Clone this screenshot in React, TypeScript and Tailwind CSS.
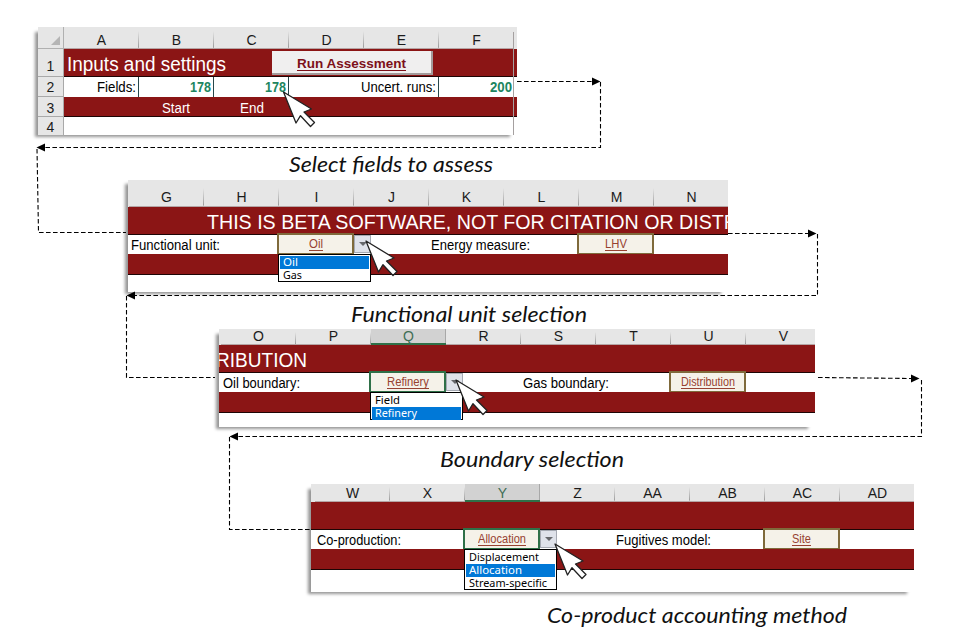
import { useLayoutEffect, useRef, useState, type ReactNode } from "react";

const SANS = "font-['Liberation_Sans',Arial,sans-serif]";

/** A single line of text, condensed or stretched to an exact width. */
function Fit({ w, className = "", line, children }: { w: number; className?: string; line?: boolean; children: ReactNode }) {
  const ref = useRef<HTMLSpanElement>(null);
  const [scale, setScale] = useState(1);
  useLayoutEffect(() => {
    const el = ref.current;
    if (el) setScale(w / parseFloat(getComputedStyle(el).width));
  }, [w]);
  return (
    <span className={`block shrink-0 whitespace-nowrap ${className}`} style={{ width: w }}>
      <span
        ref={ref}
        className={line ? "inline-block origin-left underline decoration-1 underline-offset-2" : "inline-block origin-left"}
        style={{ transform: `scaleX(${scale})` }}
      >
        {children}
      </span>
    </span>
  );
}

function Letters({ names, active, className = "" }: { names: string[]; active?: string; className?: string }) {
  return (
    <div className={`flex items-stretch bg-[#e6e6e6] text-[14px] leading-[15px] ${className}`}>
      {names.map((n) => (
        <div
          key={n}
          className={
            n === active
              ? "flex w-[75px] shrink-0 items-end justify-center border-b border-b-[#2f7048] bg-[#d2d2d2] text-[#3f6e55] shadow-[inset_0_-1px_0_#2f7048,inset_-1px_0_0_#a8a8a8]"
              : "flex w-[75px] shrink-0 items-end justify-center border-b border-b-[#b5a5a5] bg-linear-to-b from-transparent to-[#9b9b9b] bg-[length:1px_80%] bg-right-bottom bg-no-repeat text-[#1b1b1b]"
          }
        >
          {n}
        </div>
      ))}
    </div>
  );
}

function Red({ className, children }: { className: string; children?: ReactNode }) {
  return <div className={`flex overflow-hidden border-b border-[#1d0505] bg-[#8b1515] text-white ${className}`}>{children}</div>;
}

function Pick({ w, green, children }: { w: number; green?: boolean; children: ReactNode }) {
  return (
    <div
      className={`-mt-[2px] flex h-[22px] w-[77px] shrink-0 justify-center border-2 bg-[#f5f2e9] text-[12px] leading-[19px] text-[#974231] ${
        green ? "border-[#2f7048]" : "border-[#7f6a3b]"
      }`}
    >
      <Fit w={w} line>{children}</Fit>
    </div>
  );
}

function DropButton() {
  return (
    <div className="flex h-[18px] w-[17px] shrink-0 items-center justify-center border border-[#a5a9b2] bg-[#dfe2ea]">
      <div className="border-x-[4px] border-t-[4px] border-x-transparent border-t-[#66686c]" />
    </div>
  );
}

function Menu({ items, active, className }: { items: [string, number][]; active: string; className: string }) {
  return (
    <div className={`absolute w-[93px] border border-black bg-white p-px font-['Noto_Sans','Open_Sans',sans-serif] text-[11.5px] ${className}`}>
      {items.map(([t, w]) => (
        <div key={t} className={`h-[13px] pl-[3px] leading-[12px] ${t === active ? "bg-[#0078d7] text-white" : "text-black"}`}>
          <Fit w={w}>{t}</Fit>
        </div>
      ))}
    </div>
  );
}

function Caption({ w, className, children }: { w: number; className: string; children: ReactNode }) {
  return (
    <div className={`font-['Lato','Open_Sans',sans-serif] text-[21px] italic leading-[26px] text-[#111] ${className}`}>
      <Fit w={w}>{children}</Fit>
    </div>
  );
}

const SHADOW = "shadow-[-3px_2px_3px_rgba(0,0,0,0.42)]";

function Cursor({ x, y }: { x: number; y: number }) {
  return (
    <path
      transform={`translate(${x} ${y})`}
      d="M0 0 L28 17 L20.5 20 L31 30.5 L27 34.5 L17 23.7 L12.5 31 Z"
      fill="#fff"
      stroke="#222"
      strokeWidth="1.3"
      strokeLinejoin="round"
    />
  );
}

function Overlay() {
  return (
    <svg className="absolute left-0 top-0" width="959" height="642">
      <g stroke="#000" strokeWidth="1.1" strokeDasharray="4.6 2.4" fill="none">
        <path d="M517 81.5H594" />
        <path d="M600.5 82V147.5H44" />
        <path d="M37 149L38.5 232.5H126" />
        <path d="M728 233.5H810" />
        <path d="M817.5 234V295.5H134" />
        <path d="M126.5 296V377.5H215" />
        <path d="M818 377.5L912 378.5" />
        <path d="M921.5 380V436.5H237" />
        <path d="M229.5 437V529.5H311" />
      </g>
      <g fill="#000">
        <path d="M600.5 81.5l-8.500-4v8z" />
        <path d="M36.500 147.500l8.500-4v8z" />
        <path d="M816.500 233.500l-8.500-4v8z" />
        <path d="M126.500 295.500l8.500-4v8z" />
        <path d="M919.500 378.500l-8.500-4v8z" />
        <path d="M229.500 436.500l8.500-4v8z" />
      </g>
      <Cursor x={283.5} y={92} />
      <Cursor x={366} y={241} />
      <Cursor x={456} y={380} />
      <Cursor x={555} y={544} />
    </svg>
  );
}

function RowHead({ className, children }: { className: string; children: ReactNode }) {
  return (
    <div className={`flex w-[26px] shrink-0 items-end justify-center border-b border-r border-[#a9a9a9] bg-[#e6e6e6] text-[14px] leading-4 text-[#1b1b1b] ${className}`}>
      {children}
    </div>
  );
}

export default function App() {
  return (
    <main className={`relative flex h-[642px] w-[959px] flex-col items-start overflow-hidden bg-white ${SANS} text-black`}>
      <section className="relative ml-[38px] mt-[27px] h-[108px] w-[479px]">
        <div className={`absolute bottom-0 left-0 right-[4px] top-[3px] ${SHADOW}`} />
        <div className="relative flex h-full flex-col">
          <div className="flex h-[22px] bg-[#e6e6e6]">
            <div className="flex w-[26px] items-end justify-end border-b border-r border-[#b0b0b0] pb-[3px] pr-[3px]">
              <svg width="9" height="9">
                <path d="M9 0V9H0Z" fill="#b5b5b5" />
              </svg>
            </div>
            <Letters names={["A", "B", "C", "D", "E", "F"]} />
          </div>
          <div className="flex h-[28px]">
            <RowHead className="pb-[2px]">1</RowHead>
            <Red className="flex-1">
              <Fit w={159} className="ml-[3px] pt-[3px] text-[20px] leading-6">Inputs and settings</Fit>
              <div className="ml-[46px] mt-[2px] flex h-[24px] w-[161px] justify-center border-b-2 border-r-2 border-[#a39b9b] bg-[#f0efef] text-[13px] font-bold leading-[25px] text-[#7d1019]">
                <Fit w={109} line>Run Assessment</Fit>
              </div>
            </Red>
          </div>
          <div className="flex h-[20px] text-[14px] leading-[20px]">
            <RowHead className="pb-px">2</RowHead>
            <div className="flex w-[453px] bg-white">
              <div className="flex w-[75px] justify-end border-r border-[#27484c] pr-[2px]"><Fit w={39}>Fields:</Fit></div>
              <div className="flex w-[75px] justify-end border-r border-[#27484c] pr-[2px] font-bold text-[#208560]"><Fit w={21}>178</Fit></div>
              <div className="flex w-[75px] justify-end border-r border-[#27484c] pr-[2px] font-bold text-[#208560]"><Fit w={21}>178</Fit></div>
              <div className="flex w-[150px] justify-end border-r border-[#27484c] pr-[2px]"><Fit w={75}>Uncert. runs:</Fit></div>
              <div className="flex w-[75px] justify-end pr-[2px] font-bold text-[#208560]"><Fit w={22}>200</Fit></div>
            </div>
          </div>
          <div className="flex h-[20px]">
            <RowHead className="">3</RowHead>
            <Red className="flex-1 text-[14px] leading-[22px]">
              <Fit w={28} className="ml-[98px]">Start</Fit>
              <Fit w={24} className="ml-[50px]">End</Fit>
            </Red>
          </div>
          <div className="flex h-[18px]">
            <RowHead className="-mb-px">4</RowHead>
            <div className="w-[449px] bg-white" />
          </div>
        </div>
        <div className="absolute left-[475px] top-[5px] h-[103px] w-px bg-[#a5a0a0]" />
      </section>

      <div className="h-[45px]">
        <Caption w={204} className="ml-[289px] pt-[16px]">Select fields to assess</Caption>
      </div>

      <section className="relative ml-[128px] h-[112px] w-[600px]">
        <div className={`absolute bottom-0 left-0 right-[4px] top-[2px] ${SHADOW}`} />
        <div className="relative flex h-full flex-col bg-white">
          <Letters names={["G", "H", "I", "J", "K", "L", "M", "N"]} className="h-[27px] overflow-hidden pl-px pt-[4px] *:pb-px" />
          <Red className="h-[28px]">
            <Fit w={531} className="ml-[79px] pt-[3px] text-[20px] leading-6">THIS IS BETA SOFTWARE, NOT FOR CITATION OR DISTR</Fit>
          </Red>
          <div className="flex h-[19px] text-[14px] leading-[21px]">
            <Fit w={89} className="ml-[3px]">Functional unit:</Fit>
            <div className="ml-[57px] flex">
              <Pick w={14}>Oil</Pick>
              <DropButton />
            </div>
            <Fit w={99} className="ml-[60px]">Energy measure:</Fit>
            <div className="ml-[47px] flex"><Pick w={22}>LHV</Pick></div>
          </div>
          <Red className="h-[21px]" />
        </div>
        <Menu className="left-[150px] top-[74px] h-[28px]" items={[["Oil", 15], ["Gas", 19]]} active="Oil" />
      </section>

      <div className="h-[37px]">
        <Caption w={236} className="ml-[351px] pt-[9px]">Functional unit selection</Caption>
      </div>

      <section className="relative ml-[219px] h-[98px] w-[596px]">
        <div className={`absolute bottom-0 left-0 right-[4px] top-[3px] ${SHADOW}`} />
        <div className="relative flex h-full flex-col bg-white">
          <Letters names={["O", "P", "Q", "R", "S", "T", "U", "V"]} active="Q" className="h-[16px] overflow-hidden pl-[2px]" />
          <Red className="h-[28px]">
            <Fit w={91} className="-ml-[3px] pt-[3px] text-[20px] leading-6">RIBUTION</Fit>
          </Red>
          <div className="flex h-[19px] text-[14px] leading-[21px]">
            <Fit w={77} className="ml-[4px]">Oil boundary:</Fit>
            <div className="ml-[69px] flex">
              <Pick w={42} green>Refinery</Pick>
              <DropButton />
            </div>
            <Fit w={86} className="ml-[60px]">Gas boundary:</Fit>
            <div className="ml-[60px] flex"><Pick w={54}>Distribution</Pick></div>
          </div>
          <Red className="h-[21px]" />
        </div>
        <Menu className="left-[151px] top-[63px] h-[28px]" items={[["Field", 25], ["Refinery", 42]]} active="Refinery" />
      </section>

      <div className="h-[57px]">
        <Caption w={184} className="ml-[440px] pt-[19px]">Boundary selection</Caption>
      </div>

      <section className="relative ml-[311px] h-[108px] w-[603px]">
        <div className={`absolute bottom-0 left-0 right-[4px] top-[3px] ${SHADOW}`} />
        <div className="relative flex h-full flex-col bg-white">
          <Letters names={["W", "X", "Y", "Z", "AA", "AB", "AC", "AD"]} active="Y" className="h-[18px] overflow-hidden pl-[4px]" />
          <Red className="h-[28px]" />
          <div className="flex h-[19px] text-[14px] leading-[21px]">
            <Fit w={84} className="ml-[6px]">Co-production:</Fit>
            <div className="ml-[62px] flex">
              <Pick w={48} green>Allocation</Pick>
              <DropButton />
            </div>
            <Fit w={95} className="ml-[59px]">Fugitives model:</Fit>
            <div className="ml-[52px] flex"><Pick w={19}>Site</Pick></div>
          </div>
          <Red className="h-[21px]" />
        </div>
        <Menu
          className="left-[153px] top-[65px] h-[41px]"
          items={[["Displacement", 70], ["Allocation", 53], ["Stream-specific", 78]]}
          active="Allocation"
        />
      </section>

      <Caption w={300} className="ml-[547px] pt-[10px]">Co-product accounting method</Caption>
      <Overlay />
    </main>
  );
}
